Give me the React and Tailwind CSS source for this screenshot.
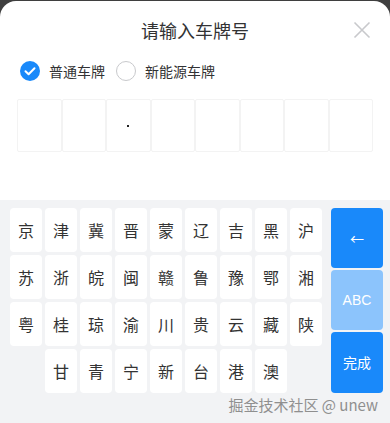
import React from 'react';

const rows = [
  ['京', '津', '冀', '晋', '蒙', '辽', '吉', '黑', '沪'],
  ['苏', '浙', '皖', '闽', '赣', '鲁', '豫', '鄂', '湘'],
  ['粤', '桂', '琼', '渝', '川', '贵', '云', '藏', '陕'],
];
const lastRow = ['甘', '青', '宁', '新', '台', '港', '澳'];

const font = { fontFamily: '"Noto Sans CJK SC", "Noto Sans", sans-serif' };

const Key = ({ label, className = '' }) => (
  <div className={`h-[44px] bg-white rounded-[4px] flex items-center justify-center text-[16px] text-[#333] ${className}`}>
    {label}
  </div>
);

export default function App() {
  return (
    <div className="w-[390px] h-[423px] bg-[#3f3f3f] pt-[1px] overflow-hidden" style={font}>
      <div className="bg-white rounded-t-[16px] h-[422px] flex flex-col">
        {/* header */}
        <div className="relative h-[58px] flex items-center justify-center">
          <span className="text-[18px] text-[#323233] leading-[24px]">请输入车牌号</span>
          <svg className="absolute left-[353px] top-[20px]" width="18" height="18" viewBox="0 0 18 18">
            <path d="M1.5 1.5 L16.5 16.5 M16.5 1.5 L1.5 16.5" stroke="#c8c9cc" strokeWidth="1.6" fill="none" />
          </svg>
        </div>

        {/* plate type */}
        <div className="h-[24px] flex items-center pl-[20px] text-[14px] text-[#323233]">
          <svg width="20" height="20" viewBox="0 0 20 20">
            <circle cx="10" cy="10" r="10" fill="#1989fa" />
            <path d="M5.5 10.2 L8.6 13.2 L14.5 7.2" stroke="#fff" strokeWidth="2" fill="none" strokeLinecap="round" strokeLinejoin="round" />
          </svg>
          <span className="ml-[9px]">普通车牌</span>
          <span className="ml-[11px] w-[20px] h-[20px] rounded-full border border-[#c8c9cc]" />
          <span className="ml-[9px]">新能源车牌</span>
        </div>

        {/* plate boxes */}
        <div className="mt-[16px] ml-[17px] w-[356px] h-[53px] grid grid-cols-8">
          {Array.from({ length: 8 }).map((_, i) => (
            <div key={i} className="border border-[#f3f3f3] rounded-[2px] flex items-center justify-center">
              {i === 2 && <span className="w-[2px] h-[2px] bg-[#222]" />}
            </div>
          ))}
        </div>

        {/* keyboard */}
        <div className="mt-[48px] flex-1 bg-[#f2f3f5] pt-[8px] pl-[10px]">
          <div className="flex">
            <div className="grid grid-cols-[repeat(9,32px)] gap-x-[3px] gap-y-[3px]">
              {rows.flat().map((k) => (
                <Key key={k} label={k} />
              ))}
              {lastRow.map((k, i) => (
                <Key key={k} label={k} className={i === 0 ? 'col-start-2' : ''} />
              ))}
            </div>
            <div className="ml-[9px] w-[52px] flex flex-col gap-[2px]">
              <div className="h-[60px] bg-[#1989fa] rounded-[4px] flex items-center justify-center text-white text-[14px]">←</div>
              <div className="h-[60px] bg-[#8cc4fc] rounded-[4px] flex items-center justify-center text-white text-[14px]" style={{ fontFamily: '"Liberation Sans", sans-serif' }}>ABC</div>
              <div className="h-[61px] bg-[#1989fa] rounded-[4px] flex items-center justify-center text-white text-[14px]">完成</div>
            </div>
          </div>
          <div className="flex justify-end pr-[12px] mt-[2px] text-[15px] leading-[20px] text-[#8f8f8f]">
            掘金技术社区 @ unew
          </div>
        </div>
      </div>
    </div>
  );
}
